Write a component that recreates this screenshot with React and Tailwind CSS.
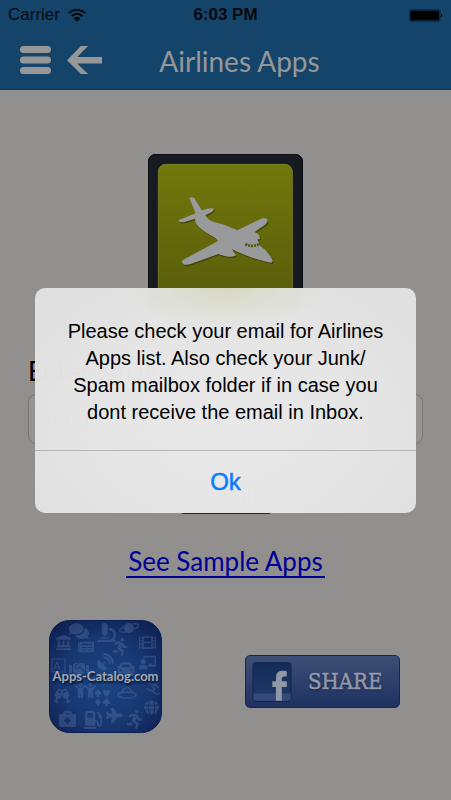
import React from "react";
import {
  FaComments, FaMicroscope, FaLandmark, FaNewspaper, FaFilm, FaHandshake, FaCar,
  FaBriefcaseMedical, FaGasPump, FaPlane, FaGlobe, FaChild, FaRunning, FaSkiing,
  FaChalkboardTeacher, FaGlassCheers, FaSatelliteDish,
} from "react-icons/fa";

function WifiIcon() {
  return (
    <svg viewBox="0 0 52 38" className="h-[13px] w-[18px]" aria-hidden="true">
      <g fill="none" stroke="#05080c" strokeWidth="5.5">
        <path d="M2 12 Q26 -7 50 12" />
        <path d="M10 21 Q26 7 42 21" />
      </g>
      <path d="M16 27 Q26 18 36 27 L26 37 Z" fill="#05080c" />
    </svg>
  );
}

function BatteryIcon() {
  return (
    <svg viewBox="0 0 102 38" className="h-[13px] w-[34px]" aria-hidden="true">
      <rect x="1" y="1" width="93" height="36" rx="6" fill="none" stroke="#0b2238" strokeWidth="2" />
      <rect x="4" y="4" width="87" height="30" rx="2" fill="#000" />
      <path d="M96 13 Q102 19 96 25 Z" fill="#000" />
    </svg>
  );
}

function Header() {
  return (
    <header className="h-[90px] border-b border-[#0e3658] bg-[#15446b]">
      <div className="grid h-[30px] grid-cols-3 items-center pr-2 pl-2 text-[17px] text-[#05080c]">
        <span className="flex items-center gap-2">
          Carrier <WifiIcon />
        </span>
        <span className="text-center font-bold">6:03 PM</span>
        <span className="flex justify-end">
          <BatteryIcon />
        </span>
      </div>
      <div className="grid h-[59px] grid-cols-[1fr_auto_1fr] items-center pr-5 pl-5">
        <div className="flex items-center gap-4">
          <button type="button" aria-label="Menu">
            <svg viewBox="0 0 31 28" className="h-7 w-[31px]" fill="#979798">
              <rect width="31" height="7" rx="3.5" />
              <rect y="10.5" width="31" height="7" rx="3.5" />
              <rect y="21" width="31" height="7" rx="3.5" />
            </svg>
          </button>
          <button type="button" aria-label="Back">
            <svg viewBox="0 0 103 82" className="h-7 w-[35px]" fill="#979798">
              <path d="M0 42 L41 0 H62 L30 32 H103 V51 H30 L62 82 H41 Z" />
            </svg>
          </button>
        </div>
        <h1 className="pt-0.5 pl-7 font-['Lato',sans-serif] text-[28px] leading-8 text-[#979798]">
          Airlines Apps
        </h1>
        <span />
      </div>
    </header>
  );
}

function AirplaneLogo() {
  return (
    <svg viewBox="25 29 465 465" className="size-[155px]" role="img" aria-label="Airlines">
      <defs>
        <linearGradient id="lime" x1="0" y1="0" x2="0" y2="1">
          <stop offset="0" stopColor="#72780c" />
          <stop offset="1" stopColor="#595c0a" />
        </linearGradient>
      </defs>
      <rect x="26" y="30" width="463" height="463" rx="22" fill="#161b21" stroke="#05070a" strokeWidth="3" />
      <rect x="56" y="60" width="402" height="402" rx="22" fill="url(#lime)" stroke="#7d8328" strokeWidth="2.5" />
      <path
        transform="translate(3 4)"
        fill="#363906"
        opacity=".7"
        d="M149 161 Q156 157 164 161 L187 198 Q207 190 221 192 Q224 198 216 203 L197 213 Q204 225 216 231 Q256 240 293 258 L368 222 Q379 218 384 228 Q384 235 378 240 L345 263 Q361 269 361 283 L352 286 Q360 292 356 300 Q385 320 399 348 Q400 355 392 355 Q332 342 277 315 Q280 322 289 332 Q286 338 266 337 Q248 334 236 329 L153 359 Q130 366 127 353 Q126 348 135 344 L235 290 Q228 280 212 272 Q180 255 168 235 L166 223 L134 233 Q119 236 116 228 L168 207 Z"
      />
      <path
        fill="#999a9b"
        d="M149 161 Q156 157 164 161 L187 198 Q207 190 221 192 Q224 198 216 203 L197 213 Q204 225 216 231 Q256 240 293 258 L368 222 Q379 218 384 228 Q384 235 378 240 L345 263 Q361 269 361 283 L352 286 Q360 292 356 300 Q385 320 399 348 Q400 355 392 355 Q332 342 277 315 Q280 322 289 332 Q286 338 266 337 Q248 334 236 329 L153 359 Q130 366 127 353 Q126 348 135 344 L235 290 Q228 280 212 272 Q180 255 168 235 L166 223 L134 233 Q119 236 116 228 L168 207 Z"
      />
      <path d="M317 299 Q337 310 356 300" fill="none" stroke="#4f530c" strokeWidth="8" strokeDasharray="6 3" />
    </svg>
  );
}

function CatalogArtwork() {
  return (
    <svg viewBox="0 0 113 113" className="col-start-1 row-start-1 size-[113px]" aria-hidden="true">
      <defs>
        <radialGradient id="catalog" cx=".5" cy=".55" r=".72">
          <stop offset="0" stopColor="#1c4584" />
          <stop offset=".55" stopColor="#173670" />
          <stop offset="1" stopColor="#0b1c4c" />
        </radialGradient>
      </defs>
      <rect x=".5" y=".5" width="112" height="112" rx="20" fill="url(#catalog)" stroke="#0c1e50" />
      <g color="#6a86b4" opacity=".3">
        <FaComments x="20" y="1" size="20" />
        <FaLandmark x="7" y="15" size="15" />
        <FaNewspaper x="29" y="19" size="16" />
        <FaMicroscope x="48" y="3" size="19" />
        <g fill="currentColor" stroke="currentColor">
          <circle cx="80" cy="8" r="5" stroke="none" />
          <ellipse cx="80" cy="8" rx="10" ry="3" fill="none" strokeWidth="1.2" transform="rotate(-18 80 8)" />
        </g>
        <FaFilm x="90" y="14" size="17" />
        <FaRunning x="62" y="18" size="18" />
        <FaChalkboardTeacher x="90" y="34" size="17" />
        <rect x="3" y="39" width="13" height="13" fill="none" stroke="currentColor" />
        <path d="M5 49 L8 42 L11 49 M6 47 H10" fill="none" stroke="currentColor" />
        <FaHandshake x="20" y="39" size="20" />
        <FaSatelliteDish x="48" y="33" size="17" />
        <FaCar x="68" y="40" size="18" />
        <FaGlassCheers x="4" y="67" size="18" />
        <FaChild x="24" y="63" size="15" />
        <FaChild x="34" y="63" size="15" />
        <g fill="currentColor" transform="translate(46 69)">
          <path d="M3 0 L6 4 Q5 7 3.500 5 L4.500 8 H1.500 L2.500 5 Q1 7 0 4 Z" />
          <path d="M8 2 Q10 -1 11.500 2 Q13 -1 15 2 Q15 5 11.500 8 Q8 5 8 2 Z" />
          <path d="M3 9 L6 13 L3 17 L0 13 Z" />
          <path d="M11.500 9 L13 11 L15 12 V15 H12 L13 17 H10 L11 15 H8 V12 L10 11 Z" />
        </g>
        <g fill="none" stroke="currentColor" strokeWidth="1.500">
          <ellipse cx="78" cy="75" rx="9" ry="3" />
          <path d="M72 73 Q78 62 84 73" />
        </g>
        <FaSkiing x="97" y="61" size="14" />
        <FaGlobe x="95" y="80" size="15" />
        <FaBriefcaseMedical x="10" y="90" size="17" />
        <FaGasPump x="35" y="91" size="18" />
        <FaPlane x="57" y="87" size="17" />
        <FaRunning x="76" y="90" size="19" />
      </g>
    </svg>
  );
}

function FacebookMark() {
  return (
    <svg viewBox="0 0 120 122" className="size-10" aria-hidden="true">
      <defs>
        <linearGradient id="fb" x1="0" y1="0" x2="0" y2="1">
          <stop offset="0" stopColor="#132b59" />
          <stop offset="1" stopColor="#233a69" />
        </linearGradient>
      </defs>
      <rect x="2" y="2" width="116" height="118" rx="9" fill="url(#fb)" stroke="#12244b" strokeWidth="3" />
      <path d="M3 96 H117 V111 Q117 118 109 118 H11 Q3 118 3 111 Z" fill="#34497a" />
      <path
        d="M72 118 V76 H61 V59 H72 V47 Q72 27 91 27 Q99 25 105 29 V44 H97 Q90 44 90 51 V59 H105 V76 H90 V118 Z"
        fill="#9098a8"
      />
    </svg>
  );
}

function AlertDialog() {
  return (
    <div
      role="alertdialog"
      aria-modal="true"
      aria-describedby="alert-message"
      className="absolute inset-x-[35px] top-[288px] overflow-hidden rounded-[10px] bg-[radial-gradient(ellipse_at_50%_60%,rgba(234,234,234,0.985)_0%,rgba(231,231,231,0.985)_45%,rgba(225,225,225,0.985)_85%)]"
    >
      <div className="bg-[radial-gradient(ellipse_100px_40px_at_50%_0%,rgba(205,209,165,0.5),rgba(215,218,190,0.3)_60%,transparent)]">
        <p id="alert-message" className="px-4 pt-[30px] pb-[24px] text-center text-[20px] leading-[27px] text-black">
          Please check your email for Airlines
          <br />
          Apps list. Also check your Junk/
          <br />
          Spam mailbox folder if in case you
          <br />
          dont receive the email in Inbox.
        </p>
      </div>
      <button
        type="button"
        className="block h-[63px] w-full border-t border-[#b4b4b4] text-[24px] font-normal text-[#0a7aff] [-webkit-text-stroke:0.5px_#0a7aff]"
      >
        Ok
      </button>
    </div>
  );
}

export default function App() {
  return (
    <div className="relative min-h-screen bg-[#92908e] font-['Liberation_Sans',Arial,sans-serif]">
      <Header />
      <main>
        <div className="flex justify-center pt-16">
          <AirplaneLogo />
        </div>
        <form className="px-7 pt-[46px]" onSubmit={(e) => e.preventDefault()}>
          <label htmlFor="email" className="block font-['Lato',sans-serif] text-[26px] leading-[32px] text-black">
            Enter Email
          </label>
          <input
            id="email"
            type="email"
            defaultValue="vanna@gmail.com"
            className="mt-[7px] h-[50px] w-full rounded-lg border border-[#777674] bg-[#959493] px-3 text-[22px] text-[#333]"
          />
          <div className="flex justify-center pt-8">
            <button
              type="submit"
              className="h-[38px] w-24 rounded-md border-b-2 border-[#2a2a2a] bg-[#8a8987] font-['Lato',sans-serif] text-[22px] text-[#333]"
            >
              Submit
            </button>
          </div>
        </form>
        <div className="flex justify-center pt-8">
          <a
            href="#samples"
            className="border-b-2 border-[#000096] px-0.5 font-['Lato',sans-serif] text-[26px] leading-[30px] text-[#000096]"
          >
            See Sample Apps
          </a>
        </div>
        <div className="grid grid-cols-[1fr_auto] items-center pt-[42px] pr-[51px] pl-[49px]">
          <a href="#catalog" className="grid w-[113px] place-items-center">
            <CatalogArtwork />
            <span className="col-start-1 row-start-1 font-['Lato',sans-serif] text-[13px] font-bold whitespace-nowrap text-[#a3a8b1] [text-shadow:1px_2px_2px_#08142e]">
              Apps-Catalog.com
            </span>
          </a>
          <button
            type="button"
            className="mt-2.5 flex h-[53px] w-[155px] items-center gap-4 rounded-[5px] border border-[#0d2a5e] bg-linear-to-b from-[#3e4f76] to-[#1f3160] pl-1.5"
          >
            <FacebookMark />
            <span className="font-['DejaVu_Serif_Condensed','DejaVu_Serif',serif] text-[22px] text-[#929aa9] [-webkit-text-stroke:0.5px_#929aa9] [text-shadow:0_1px_2px_#101c3c]">
              SHARE
            </span>
          </button>
        </div>
      </main>
      <AlertDialog />
    </div>
  );
}
